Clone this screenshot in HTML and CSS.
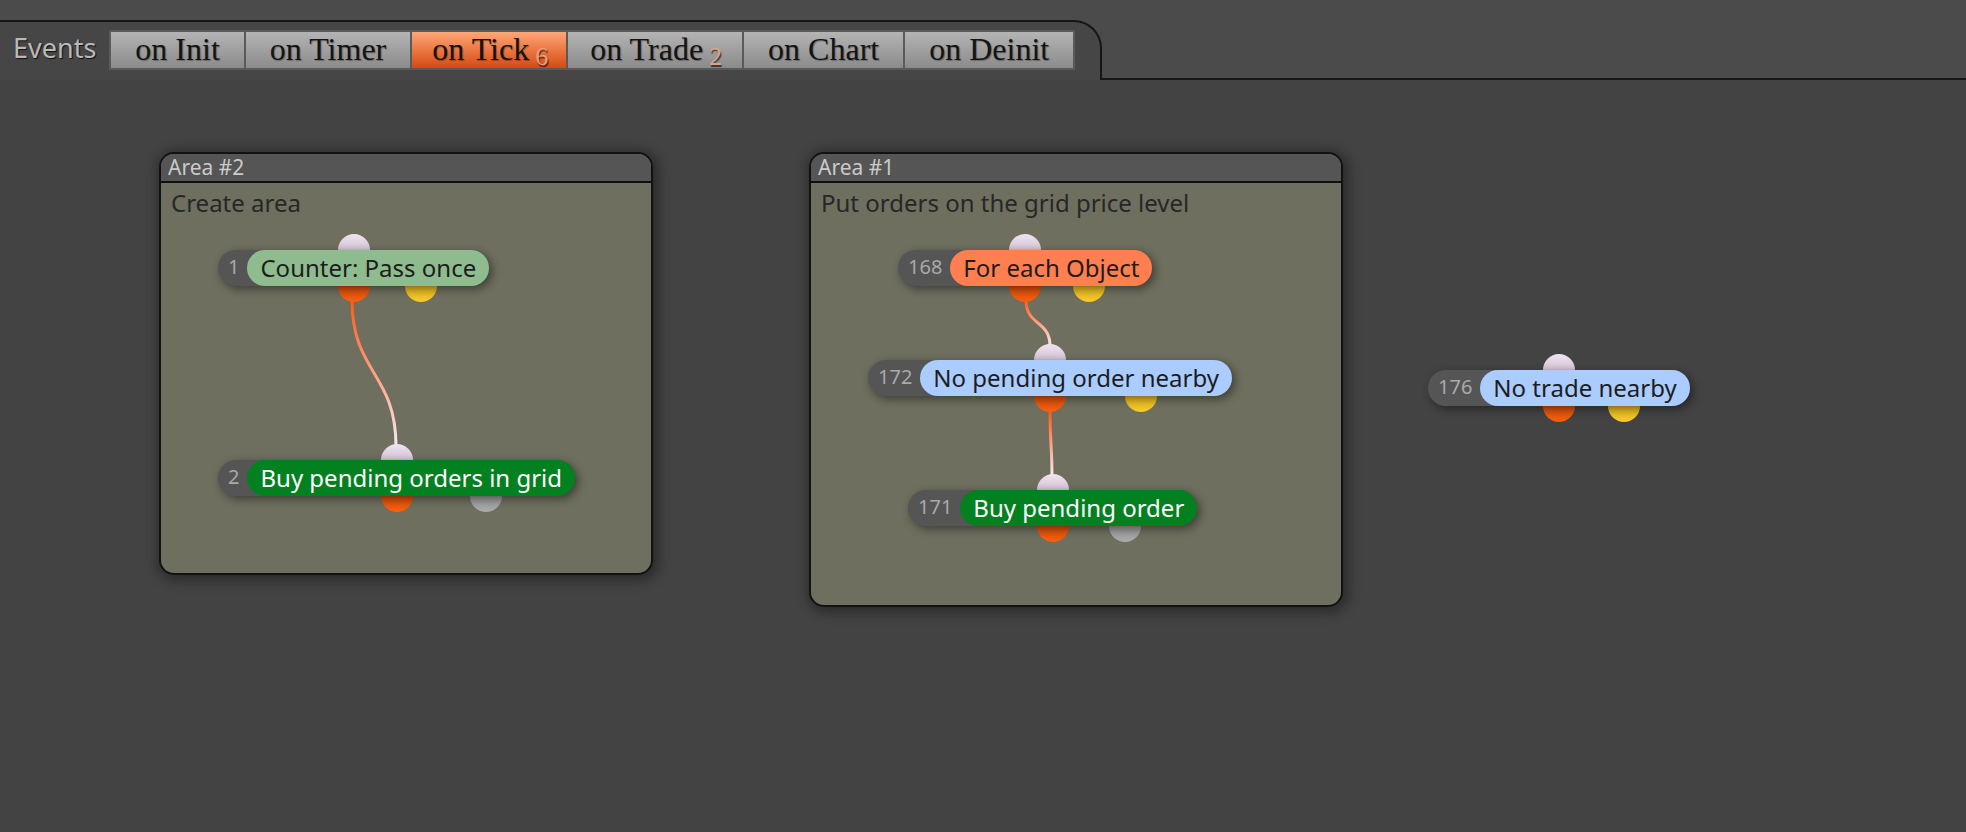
FILE: index.html
```html
<!DOCTYPE html>
<html lang="en">

<head>
    <title>Events</title>
    <link rel="stylesheet" href="styles.css">
</head>

<body>

    <!-- Event tabs -->
    <div class="event-bar">
        <div class="event-tab">
            <span class="event-title">Events</span>
            <div class="event-buttons">
                <button class="event-btn">on Init</button>
                <button class="event-btn">on Timer</button>
                <button class="event-btn has-count active">on Tick<span class="event-count">6</span></button>
                <button class="event-btn has-count">on Trade<span class="event-count">2</span></button>
                <button class="event-btn">on Chart</button>
                <button class="event-btn">on Deinit</button>
            </div>
        </div>
        <div class="event-rest"></div>
    </div>

    <!-- Workspace -->
    <div class="workspace">

        <!-- Area #2 -->
        <div class="area" style="left:159px; top:72px; width:494px; height:423px">
            <div class="area-header">Area #2</div>
            <div class="area-desc">Create area</div>

            <svg class="links" width="490" height="419">
                <defs>
                    <linearGradient id="link1" gradientUnits="userSpaceOnUse" x1="0" y1="146" x2="0" y2="292">
                        <stop offset="0" stop-color="#ff5a12" />
                        <stop offset="0.5" stop-color="#ff9f84" />
                        <stop offset="1" stop-color="#f6eaf4" />
                    </linearGradient>
                </defs>
                <path d="M191,146 C191,219 235,219 235,292" stroke="url(#link1)" />
            </svg>

            <div class="node" style="left:57px; top:96px">
                <span class="pin pin-in"></span>
                <div class="node-body">
                    <span class="node-id">1</span>
                    <span class="node-label label-counter">Counter: Pass once</span>
                </div>
                <span class="pin pin-out"></span>
                <span class="pin pin-alt pin-yellow"></span>
            </div>

            <div class="node" style="left:57px; top:306px">
                <span class="pin pin-in"></span>
                <div class="node-body">
                    <span class="node-id">2</span>
                    <span class="node-label label-action">Buy pending orders in grid</span>
                </div>
                <span class="pin pin-out"></span>
                <span class="pin pin-alt pin-gray"></span>
            </div>
        </div>

        <!-- Area #1 -->
        <div class="area" style="left:809px; top:72px; width:534px; height:455px">
            <div class="area-header">Area #1</div>
            <div class="area-desc">Put orders on the grid price level</div>

            <svg class="links" width="530" height="451">
                <defs>
                    <linearGradient id="link2" gradientUnits="userSpaceOnUse" x1="0" y1="146" x2="0" y2="192">
                        <stop offset="0" stop-color="#ff5a12" />
                        <stop offset="0.5" stop-color="#ff9f84" />
                        <stop offset="1" stop-color="#f6eaf4" />
                    </linearGradient>
                    <linearGradient id="link3" gradientUnits="userSpaceOnUse" x1="0" y1="258" x2="0" y2="322">
                        <stop offset="0" stop-color="#ff5a12" />
                        <stop offset="0.5" stop-color="#ff9f84" />
                        <stop offset="1" stop-color="#f6eaf4" />
                    </linearGradient>
                </defs>
                <path d="M215,146 C215,172 239,166 239,192" stroke="url(#link2)" />
                <path d="M239,258 C239,290 241,290 241,322" stroke="url(#link3)" />
            </svg>

            <div class="node" style="left:87px; top:96px">
                <span class="pin pin-in"></span>
                <div class="node-body">
                    <span class="node-id">168</span>
                    <span class="node-label label-loop">For each Object</span>
                </div>
                <span class="pin pin-out"></span>
                <span class="pin pin-alt pin-yellow"></span>
            </div>

            <div class="node" style="left:57px; top:206px">
                <span class="pin pin-in"></span>
                <div class="node-body">
                    <span class="node-id">172</span>
                    <span class="node-label label-check">No pending order nearby</span>
                </div>
                <span class="pin pin-out"></span>
                <span class="pin pin-alt pin-yellow"></span>
            </div>

            <div class="node" style="left:97px; top:336px">
                <span class="pin pin-in"></span>
                <div class="node-body">
                    <span class="node-id">171</span>
                    <span class="node-label label-action">Buy pending order</span>
                </div>
                <span class="pin pin-out"></span>
                <span class="pin pin-alt pin-gray"></span>
            </div>
        </div>

        <!-- Free node -->
        <div class="node" style="left:1428px; top:290px">
            <span class="pin pin-in"></span>
            <div class="node-body">
                <span class="node-id">176</span>
                <span class="node-label label-check">No trade nearby</span>
            </div>
            <span class="pin pin-out"></span>
            <span class="pin pin-alt pin-yellow"></span>
        </div>

    </div>

</body>

</html>
```

FILE: styles.css
```css
/* Base Reset */
* {
    box-sizing: border-box;
    margin: 0;
    padding: 0;
}

body {
    background-color: #434343;
    font-family: 'Noto Sans', 'Open Sans', sans-serif;
    overflow: hidden;
}

/* Event tabs */
.event-bar {
    display: flex;
    height: 80px;
    padding-top: 20px;
    background-color: #4b4b4b;
}

.event-tab {
    display: flex;
    align-items: flex-start;
    gap: 13px;
    width: 1102px;
    padding: 8px 0 0 13px;
    background-color: #464646;
    border-top: 2px solid #161616;
    border-right: 2px solid #161616;
    border-top-right-radius: 28px;
}

.event-rest {
    flex: 1;
    border-bottom: 2px solid #161616;
}

.event-title {
    font-size: 27px;
    line-height: 36px;
    color: #b9b9b9;
    text-shadow: 1px 1px 1px #111;
}

.event-buttons {
    display: flex;
    gap: 2px;
    padding: 2px;
    background-color: #5a5a5a;
}

.event-btn {
    height: 36px;
    padding: 0 24px 2px;
    border: none;
    background: linear-gradient(#b4b4b4, #8b8b8b);
    font-family: 'Liberation Serif', serif;
    font-size: 32px;
    line-height: 34px;
    color: #141414;
    text-shadow: 1px 1px 1px rgba(0, 0, 0, 0.3);
    cursor: pointer;
}

.event-btn.has-count {
    padding: 0 20px 2px 22px;
}

.event-btn.active {
    padding: 0 18px 2px 20px;
    background: linear-gradient(#ffa676, #d64a12);
}

.event-count {
    margin-left: 6px;
    font-size: 26px;
    vertical-align: -5px;
    color: #e2a07e;
    text-shadow: 1px 2px 1px rgba(0, 0, 0, 0.65);
}

/* Workspace */
.workspace {
    position: relative;
    height: 752px;
}

.area {
    position: absolute;
    background-color: #6e6f5e;
    border: 2px solid #121212;
    border-radius: 15px;
    box-shadow: 2px 2px 12px 4px rgba(0, 0, 0, 0.35);
}

.area-header {
    height: 29px;
    padding-left: 7px;
    background-color: #555;
    border-bottom: 2px solid #111;
    border-radius: 13px 13px 0 0;
    font-size: 21px;
    line-height: 27px;
    color: #cacaca;
}

.area-desc {
    padding: 4px 10px;
    font-size: 24px;
    line-height: 32px;
    color: #272727;
}

.links {
    position: absolute;
    top: 0;
    left: 0;
    pointer-events: none;
}

.links path {
    fill: none;
    stroke-width: 3;
}

/* Nodes */
.node {
    position: absolute;
}

.node-body {
    position: relative;
    z-index: 1;
    display: flex;
    align-items: center;
    height: 36px;
    background-color: #555;
    border-radius: 18px;
    box-shadow: 3px 3px 10px rgba(0, 0, 0, 0.45);
}

.node-id {
    padding: 0 8px 4px 10px;
    font-size: 20px;
    color: #a9a9a9;
}

.node-label {
    height: 36px;
    padding: 0 13px;
    border-radius: 18px;
    font-size: 24px;
    line-height: 36px;
    color: #1d1d1d;
    white-space: nowrap;
}

.label-counter {
    background-color: #8fbc8f;
}

.label-loop {
    background-color: #ff7f50;
}

.label-check {
    background-color: #aaccff;
}

.label-action {
    background-color: #03801f;
    color: #fff;
}

/* Pins */
.pin {
    position: absolute;
    left: 50%;
    width: 32px;
    height: 32px;
    border-radius: 50%;
    transform: translateX(-50%);
}

.pin-in {
    top: -16px;
    background: linear-gradient(#f1e3f1, #d6c6d6 45%, #7c6e7e);
}

.pin-out {
    bottom: -16px;
    background: linear-gradient(#7a2c06, #d9500c 55%, #fb5f0e);
}

.pin-alt {
    left: 75%;
    bottom: -16px;
}

.pin-yellow {
    background: linear-gradient(#7a6420, #e6b820 55%, #f6c92c);
}

.pin-gray {
    background: linear-gradient(#555, #9a9a9a 55%, #ababab);
}
```
